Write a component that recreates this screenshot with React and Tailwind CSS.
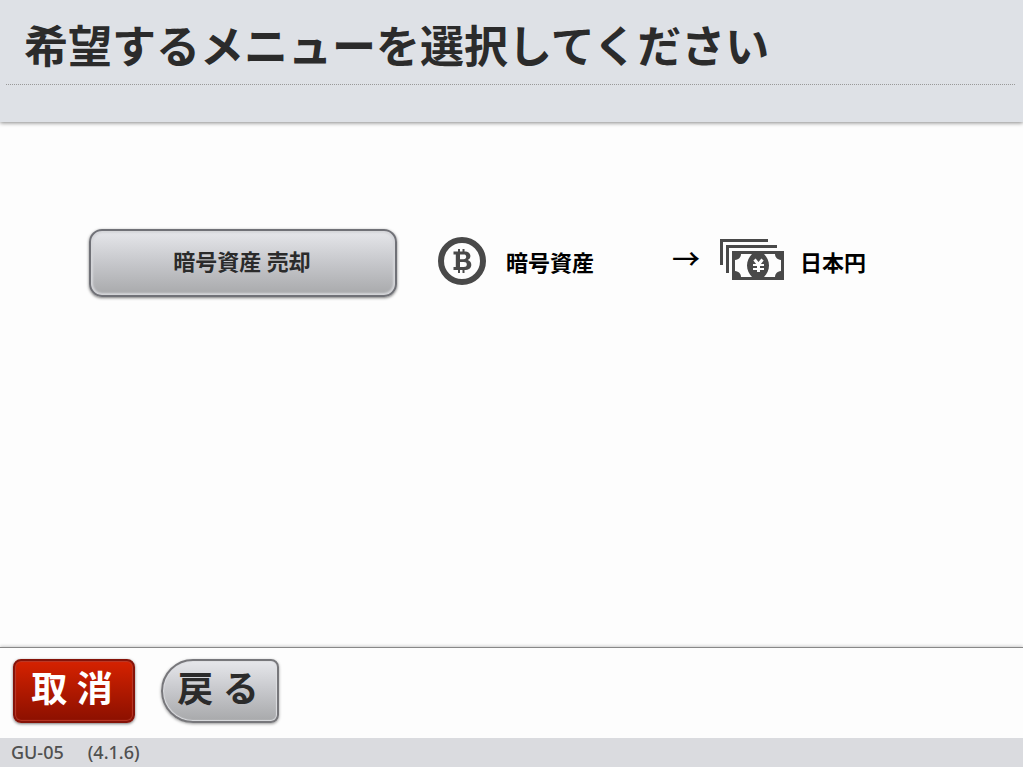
function BitcoinIcon() {
  return (
    <svg width="48" height="48" viewBox="0 0 48 48" fill="none" aria-hidden="true" className="shrink-0">
      <circle cx="24" cy="24" r="21" stroke="#494949" strokeWidth="6" />
      <path
        d="M15.500 14.500h11c4 0 5.900 2 5.900 4.600 0 2-1 3.300-2.700 4 2.200.6 3.600 2.200 3.600 4.600 0 3.400-2.600 5.300-6.800 5.300h-11v-3h2.300V17.500h-2.300zM22 17.500v4.700h3.500c1.800 0 2.700-.8 2.700-2.400s-.9-2.300-2.700-2.300zM22 25v5h3.800c2 0 3-.8 3-2.500s-1-2.500-3-2.500z"
        fill="#494949"
        fillRule="evenodd"
      />
      <path d="M21 12v4M25.500 12v4M21 32v4M25.500 32v4" stroke="#494949" strokeWidth="2" />
    </svg>
  );
}

function YenIcon() {
  return (
    <svg width="64" height="41" viewBox="0 0 64 41" fill="none" aria-hidden="true" className="mb-1 shrink-0">
      <path d="M0 0h48v3H3v23H0z" fill="#494949" />
      <path d="M6 6h51v3H9v25H6z" fill="#494949" />
      <path d="M12 12h52v29H12z" fill="#494949" />
      <path
        d="M21 15h11c-3 3-5 7-5 11.500s2 8.500 5 11.500H21c0-3-2-5.500-6-6V21c4-.5 6-3 6-6z"
        fill="#fdfdfd"
      />
      <path
        d="M55 15H44c3 3 5 7 5 11.500S47 35 44 38h11c0-3 2-5.500 6-6V21c-4-.5-6-3-6-6z"
        fill="#fdfdfd"
      />
      <path d="M34.500 20.500l4 5 4-5M38.500 25v8" stroke="#fdfdfd" strokeWidth="3" />
      <path d="M33 26h11M33 30h11" stroke="#fdfdfd" strokeWidth="2" />
    </svg>
  );
}

function MenuRow({ label, from, to }) {
  return (
    <li className="flex items-center">
      <button
        type="button"
        className="h-[68px] w-[308px] rounded-[13px] border-2 border-[#707177] bg-linear-to-b from-[#e6e7eb] via-[#c6c7cb] to-[#a8a9ab] pr-0.5 pb-1 text-[22px] leading-8 font-bold text-[#2b2b2b] shadow-[inset_0_0_2px_2px_#d4d5d9,0_1px_3px_#777]"
      >
        {label}
      </button>
      <div className="flex items-center pb-1 pl-[41px] text-[22px] leading-8 font-bold">
        <div className="flex w-[234px] items-center gap-5">
          <BitcoinIcon />
          <span className="pt-0.5">{from}</span>
        </div>
        <span className="w-12 pb-1 text-[28px] leading-8 font-medium">→</span>
        <div className="flex items-center gap-4">
          <YenIcon />
          <span className="pt-0.5">{to}</span>
        </div>
      </div>
    </li>
  );
}

export default function App() {
  return (
    <div className="flex min-h-screen flex-col bg-[#fdfdfd] font-['Noto_Sans','Noto_Sans_CJK_JP',sans-serif] text-black">
      <header className="h-[122px] bg-[#dee1e6] pr-2 pl-1.5 shadow-[0_1px_4px_#888]">
        <h1 className="border-b border-dotted border-[#999] px-[18px] pt-3.5 pb-1.5 text-[44px] leading-16 font-bold text-[#2b2b2b]">
          希望するメニューを選択してください
        </h1>
      </header>

      <main className="flex-1 px-[89px] pt-[107px]">
        <ul>
          <MenuRow label="暗号資産 売却" from="暗号資産" to="日本円" />
        </ul>
      </main>

      <nav className="flex gap-[26px] border-t border-[#888] px-[13px] pt-[11px] pb-[15px] shadow-[0_-1px_3px_#ccc]">
        <button
          type="button"
          className="h-16 w-[122px] rounded-lg border-2 border-[#851309] bg-linear-to-b from-[#d62200] to-[#8c1000] pr-1 pb-1 text-[36px] leading-10 font-bold text-white shadow-[inset_0_0_1px_1px_#b83a28,0_1px_3px_#777]"
        >
          取 消
        </button>
        <button
          type="button"
          className="h-16 w-[118px] rounded-l-[32px] rounded-r-lg border-2 border-[#77777b] bg-linear-to-b from-[#e6e7eb] via-[#c6c7cb] to-[#a8a9ab] pr-1 pb-1 text-[36px] leading-10 font-bold text-[#2b2b2b] shadow-[inset_0_0_1px_1px_#dddee2,0_1px_3px_#999]"
        >
          戻 る
        </button>
      </nav>

      <footer className="flex gap-6 bg-[#dadbdf] px-[11px] pb-px text-[18px] leading-7 font-medium text-[#505050]">
        <span>GU-05</span>
        <span>(4.1.6)</span>
      </footer>
    </div>
  );
}
